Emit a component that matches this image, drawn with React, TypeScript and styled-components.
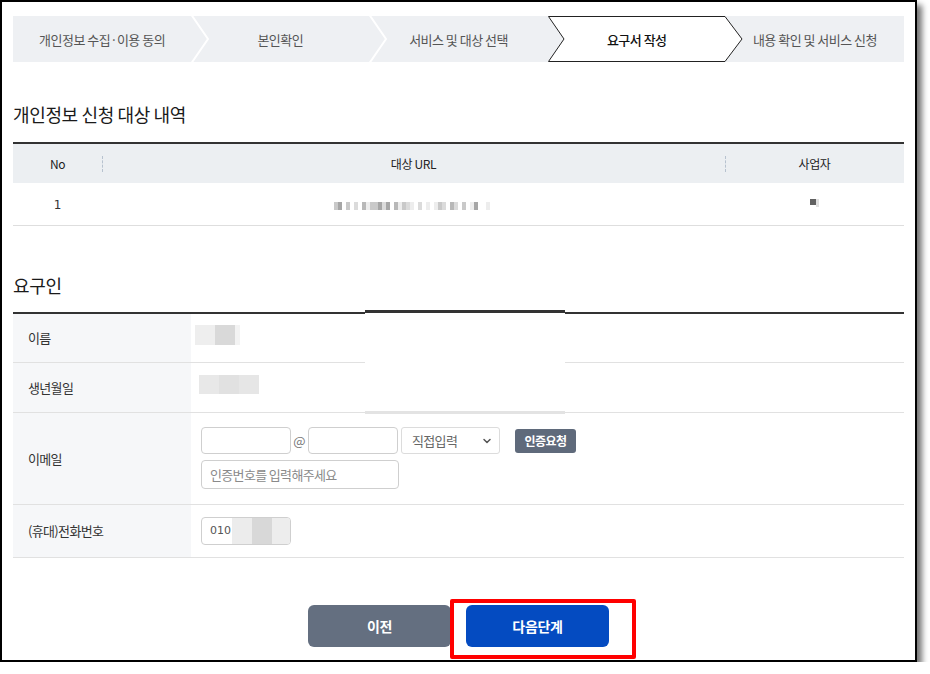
import React from "react";
import styled, { createGlobalStyle } from "styled-components";
import { ChevronDown } from "lucide-react";

const GlobalStyle = createGlobalStyle`
  html, body {
    margin: 0;
    padding: 0;
    background: #fff;
  }
  body {
    font-family: "Noto Sans CJK KR", "Noto Sans", sans-serif;
    color: #222;
  }
  * {
    box-sizing: border-box;
  }
`;

const Window = styled.div`
  position: relative;
  width: 917px;
  height: 662px;
  border: 2px solid #000;
  background: #fff;
  box-shadow: 5px 5px 6px rgba(0, 0, 0, 0.55);
  padding: 14px 11px 0;
`;

const Stepper = styled.ol`
  display: flex;
  height: 46px;
  margin: 0;
  padding: 0;
  list-style: none;
  background: #eef0f3;
`;

const Step = styled.li<{ $active?: boolean }>`
  position: relative;
  flex: 1;
  display: flex;
  align-items: center;
  justify-content: center;
  font-size: 13px;
  letter-spacing: -0.04em;
  color: ${(p) => (p.$active ? "#111" : "#555")};
  font-weight: ${(p) => (p.$active ? 500 : 400)};
  z-index: ${(p) => (p.$active ? 2 : 1)};
`;

const StepText = styled.span`
  position: relative;
  z-index: 3;
`;

const Chevron = styled.svg`
  position: absolute;
  top: 0;
  right: -18px;
  width: 18px;
  height: 46px;
  z-index: 2;
`;

const ActiveShape = styled.svg`
  position: absolute;
  top: 0;
  left: 0;
  width: 197px;
  height: 46px;
  z-index: 0;
`;

const SectionTitle = styled.h2<{ $top: number; $bottom: number }>`
  margin: ${(p) => p.$top}px 0 ${(p) => p.$bottom}px;
  font-size: 18px;
  line-height: 24px;
  font-weight: 400;
  letter-spacing: -0.02em;
  color: #1a1a1a;
`;

const DataTable = styled.table`
  width: 100%;
  border-collapse: collapse;
  table-layout: fixed;
  border-top: 2px solid #333;
`;

const Th = styled.th`
  position: relative;
  height: 40px;
  padding: 0;
  background: #eceff2;
  font-weight: 400;
  font-size: 12px;
  letter-spacing: -0.03em;
  color: #222;

  & + &::before {
    content: "";
    position: absolute;
    left: 0;
    top: 12px;
    height: 16px;
    border-left: 1px dashed #b7c2cf;
  }
`;

const Td = styled.td`
  height: 42px;
  padding: 0;
  text-align: center;
  border-bottom: 1px solid #dedede;
  font-size: 12px;
  color: #333;
`;

const Num = styled.span`
  font-family: "DejaVu Sans", sans-serif;
  font-size: 12px;
  color: #333;
`;

const PhonePrefix = styled.span`
  font-family: "DejaVu Sans", sans-serif;
  font-size: 11px;
  color: #555;
`;

const Pixels = styled.span<{ $lift?: number }>`
  display: inline-flex;
  vertical-align: middle;
  position: relative;
  top: ${(p) => -(p.$lift ?? 0)}px;
`;

const Pixel = styled.i<{ $w: number; $shade: number; $h?: number }>`
  display: block;
  width: ${(p) => p.$w}px;
  height: ${(p) => p.$h ?? 8}px;
  background: ${(p) => `hsl(0, 0%, ${p.$shade}%)`};
`;

const FormTable = styled.div`
  border-top: 2px solid #333;
`;

const FormRow = styled.div<{ $h: number }>`
  display: grid;
  grid-template-columns: 178px 1fr;
  min-height: ${(p) => p.$h}px;
  border-bottom: 1px solid #e1e1e1;
`;

const Label = styled.div`
  display: flex;
  align-items: center;
  padding-left: 15px;
  background: #f6f7f9;
  font-size: 13px;
  letter-spacing: -0.05em;
  color: #333;
`;

const Value = styled.div`
  display: flex;
  flex-direction: column;
  justify-content: center;
  gap: 6px;
  padding: 0 10px;
`;

const Line = styled.div`
  display: flex;
  align-items: center;
`;

const Blur = styled.div<{ $x: number; $y: number }>`
  display: flex;
  margin: ${(p) => p.$y}px 0 0 ${(p) => p.$x}px;
`;

const BlurCell = styled.i<{ $w: number; $h: number; $c: string }>`
  display: block;
  width: ${(p) => p.$w}px;
  height: ${(p) => p.$h}px;
  background: ${(p) => p.$c};
`;

const Input = styled.input<{ $w: number; $h?: number }>`
  width: ${(p) => p.$w}px;
  height: ${(p) => p.$h ?? 27}px;
  padding: 0 8px;
  border: 1px solid #cfcfcf;
  border-radius: 4px;
  font-family: inherit;
  font-size: 13px;
  letter-spacing: -0.05em;
  color: #333;
  background: #fff;

  &::placeholder {
    color: #8a8a8a;
  }
`;

const At = styled.span`
  width: 17px;
  text-align: center;
  font-size: 13px;
  color: #777;
`;

const FakeSelect = styled.div`
  display: flex;
  align-items: center;
  justify-content: space-between;
  width: 99px;
  height: 27px;
  margin-left: 3px;
  padding: 0 6px 0 10px;
  border: 1px solid #dcdcdc;
  border-radius: 3px;
  font-size: 13px;
  letter-spacing: -0.05em;
  color: #666;
`;

const SmallButton = styled.button`
  width: 61px;
  height: 24px;
  margin-left: 15px;
  padding: 0;
  border: 0;
  border-radius: 3px;
  background: #5f6a7b;
  color: #fff;
  font-family: inherit;
  font-size: 12px;
  font-weight: 700;
  letter-spacing: -0.04em;
`;

const PhoneBox = styled.div`
  display: flex;
  align-items: center;
  width: 90px;
  height: 28px;
  padding-left: 8px;
  border: 1px solid #cfcfcf;
  border-radius: 4px;
  overflow: hidden;
`;

const Ghost = styled.div`
  position: absolute;
  left: 363px;
  top: 308px;
  width: 200px;
  height: 104px;
  background: #fff;
  border-top: 3px solid #333;
  border-bottom: 3px solid #e3e3e3;
  z-index: 5;
`;

const ButtonRow = styled.div`
  display: flex;
  justify-content: center;
  gap: 15px;
  margin-top: 47px;
`;

const Button = styled.button<{ $primary?: boolean }>`
  width: 143px;
  height: 42px;
  border: 0;
  border-radius: 6px;
  background: ${(p) => (p.$primary ? "#044bc1" : "#646f80")};
  color: #fff;
  font-family: inherit;
  font-size: 14px;
  font-weight: 700;
  letter-spacing: -0.02em;
`;

const Highlight = styled.div`
  position: relative;

  &::after {
    content: "";
    position: absolute;
    top: -6px;
    left: -16px;
    right: -27px;
    bottom: -12px;
    border: 4px solid #ff0000;
    border-radius: 2px;
    pointer-events: none;
  }
`;

const steps = [
  "개인정보 수집·이용 동의",
  "본인확인",
  "서비스 및 대상 선택",
  "요구서 작성",
  "내용 확인 및 서비스 신청",
];
const activeStep = 3;

// mosaic of the hidden URL, one digit = lightness step, "-" = gap
const urlMosaic = "75-7-8-6977585-69789-8-9-978-68-7-95--9-";

export default function App() {
  return (
    <>
      <GlobalStyle />
      <Window>
        <Stepper>
          {steps.map((s, i) => {
            const active = i === activeStep;
            const showChevron = i < steps.length - 1 && !active && i + 1 !== activeStep;
            return (
              <Step key={s} $active={active}>
                {active && (
                  <ActiveShape viewBox="0 0 197 46">
                    <polygon
                      points="0.5,0.5 177,0.5 194,23 177,45.5 0.5,45.5 16,23"
                      fill="#fff"
                      stroke="#222"
                      strokeWidth="1"
                    />
                  </ActiveShape>
                )}
                <StepText>{s}</StepText>
                {showChevron && (
                  <Chevron viewBox="0 0 18 46">
                    <polyline points="0.5,-1 17,23 0.5,47" fill="none" stroke="#fff" strokeWidth="2" />
                  </Chevron>
                )}
              </Step>
            );
          })}
        </Stepper>

        <SectionTitle $top={40} $bottom={16}>개인정보 신청 대상 내역</SectionTitle>
        <DataTable>
          <colgroup>
            <col style={{ width: 89 }} />
            <col />
            <col style={{ width: 179 }} />
          </colgroup>
          <thead>
            <tr>
              <Th>No</Th>
              <Th>대상 URL</Th>
              <Th>사업자</Th>
            </tr>
          </thead>
          <tbody>
            <tr>
              <Td>
                <Num>1</Num>
              </Td>
              <Td>
                <Pixels>
                  {urlMosaic.split("").map((c, i) => (
                    <Pixel key={i} $w={4} $shade={c === "-" ? 100 : 30 + Number(c) * 7} />
                  ))}
                </Pixels>
              </Td>
              <Td>
                <Pixels $lift={3}>
                  <Pixel $w={6} $h={6} $shade={38} />
                  <Pixel $w={3} $h={8} $shade={88} />
                </Pixels>
              </Td>
            </tr>
          </tbody>
        </DataTable>

        <SectionTitle $top={47} $bottom={15}>요구인</SectionTitle>
        <FormTable>
          <FormRow $h={49}>
            <Label>이름</Label>
            <Value>
              <Blur $x={-6} $y={-6}>
                <BlurCell $w={20} $h={20} $c="#eeeeee" />
                <BlurCell $w={20} $h={20} $c="#d9d9d9" />
                <BlurCell $w={5} $h={20} $c="#f3f3f3" />
              </Blur>
            </Value>
          </FormRow>
          <FormRow $h={50}>
            <Label>생년월일</Label>
            <Value>
              <Blur $x={-2} $y={-6}>
                <BlurCell $w={20} $h={19} $c="#e8e8e8" />
                <BlurCell $w={20} $h={19} $c="#e1e1e1" />
                <BlurCell $w={20} $h={19} $c="#e6e6e6" />
              </Blur>
            </Value>
          </FormRow>
          <FormRow $h={92}>
            <Label>이메일</Label>
            <Value>
              <Line>
                <Input $w={90} />
                <At>@</At>
                <Input $w={90} />
                <FakeSelect>
                  직접입력
                  <ChevronDown size={12} strokeWidth={3} color="#555" />
                </FakeSelect>
                <SmallButton>인증요청</SmallButton>
              </Line>
              <Line>
                <Input $w={198} $h={29} placeholder="인증번호를 입력해주세요" />
              </Line>
            </Value>
          </FormRow>
          <FormRow $h={53}>
            <Label>(휴대)전화번호</Label>
            <Value>
              <PhoneBox>
                <PhonePrefix>010</PhonePrefix>
                <Blur $x={1} $y={0}>
                  <BlurCell $w={20} $h={26} $c="#ececec" />
                  <BlurCell $w={20} $h={26} $c="#d8d8d8" />
                  <BlurCell $w={20} $h={26} $c="#ededed" />
                </Blur>
              </PhoneBox>
            </Value>
          </FormRow>
        </FormTable>

        <ButtonRow>
          <Button>이전</Button>
          <Highlight>
            <Button $primary>다음단계</Button>
          </Highlight>
        </ButtonRow>

        <Ghost />
      </Window>
    </>
  );
}
